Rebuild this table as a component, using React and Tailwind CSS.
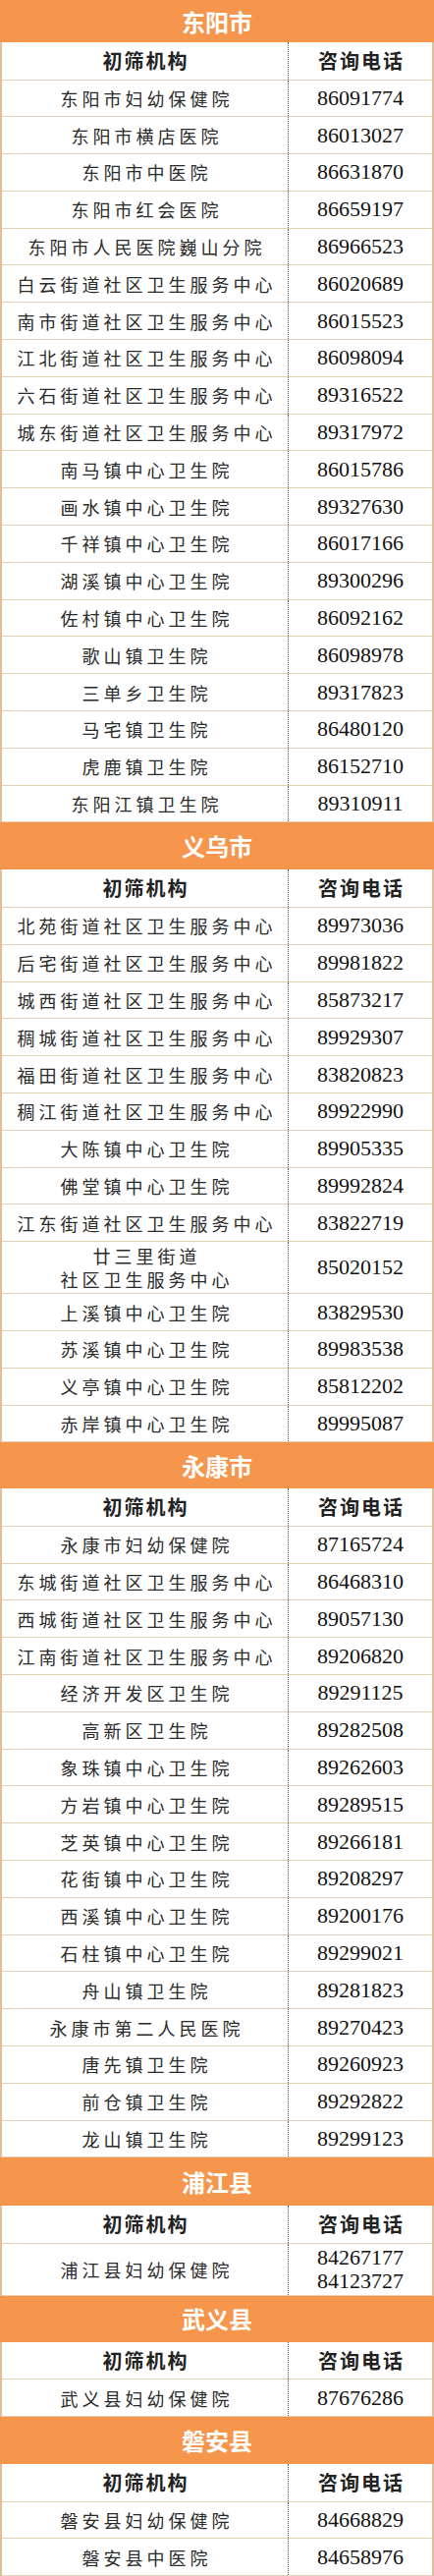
import React from "react";

const sections = [
  {
    name: "东阳市",
    headH: "h-[43px]",
    rows: [
      ["东阳市妇幼保健院", "86091774"],
      ["东阳市横店医院", "86013027"],
      ["东阳市中医院", "86631870"],
      ["东阳市红会医院", "86659197"],
      ["东阳市人民医院巍山分院", "86966523"],
      ["白云街道社区卫生服务中心", "86020689"],
      ["南市街道社区卫生服务中心", "86015523"],
      ["江北街道社区卫生服务中心", "86098094"],
      ["六石街道社区卫生服务中心", "89316522"],
      ["城东街道社区卫生服务中心", "89317972"],
      ["南马镇中心卫生院", "86015786"],
      ["画水镇中心卫生院", "89327630"],
      ["千祥镇中心卫生院", "86017166"],
      ["湖溪镇中心卫生院", "89300296"],
      ["佐村镇中心卫生院", "86092162"],
      ["歌山镇卫生院", "86098978"],
      ["三单乡卫生院", "89317823"],
      ["马宅镇卫生院", "86480120"],
      ["虎鹿镇卫生院", "86152710"],
      ["东阳江镇卫生院", "89310911"],
    ],
  },
  {
    name: "义乌市",
    headH: "h-[48px]",
    rows: [
      ["北苑街道社区卫生服务中心", "89973036"],
      ["后宅街道社区卫生服务中心", "89981822"],
      ["城西街道社区卫生服务中心", "85873217"],
      ["稠城街道社区卫生服务中心", "89929307"],
      ["福田街道社区卫生服务中心", "83820823"],
      ["稠江街道社区卫生服务中心", "89922990"],
      ["大陈镇中心卫生院", "89905335"],
      ["佛堂镇中心卫生院", "89992824"],
      ["江东街道社区卫生服务中心", "83822719"],
      [["廿三里街道", "社区卫生服务中心"], "85020152"],
      ["上溪镇中心卫生院", "83829530"],
      ["苏溪镇中心卫生院", "89983538"],
      ["义亭镇中心卫生院", "85812202"],
      ["赤岸镇中心卫生院", "89995087"],
    ],
  },
  {
    name: "永康市",
    headH: "h-[47px]",
    rows: [
      ["永康市妇幼保健院", "87165724"],
      ["东城街道社区卫生服务中心", "86468310"],
      ["西城街道社区卫生服务中心", "89057130"],
      ["江南街道社区卫生服务中心", "89206820"],
      ["经济开发区卫生院", "89291125"],
      ["高新区卫生院", "89282508"],
      ["象珠镇中心卫生院", "89262603"],
      ["方岩镇中心卫生院", "89289515"],
      ["芝英镇中心卫生院", "89266181"],
      ["花街镇中心卫生院", "89208297"],
      ["西溪镇中心卫生院", "89200176"],
      ["石柱镇中心卫生院", "89299021"],
      ["舟山镇卫生院", "89281823"],
      ["永康市第二人民医院", "89270423"],
      ["唐先镇卫生院", "89260923"],
      ["前仓镇卫生院", "89292822"],
      ["龙山镇卫生院", "89299123"],
    ],
  },
  {
    name: "浦江县",
    headH: "h-[49px]",
    rows: [["浦江县妇幼保健院", ["84267177", "84123727"]]],
  },
  {
    name: "武义县",
    headH: "h-[47px]",
    rows: [["武义县妇幼保健院", "87676286"]],
  },
  {
    name: "磐安县",
    headH: "h-[48px]",
    rows: [
      ["磐安县妇幼保健院", "84668829"],
      ["磐安县中医院", "84658976"],
    ],
  },
];

const cjk = "font-['Noto_Sans_CJK_SC',sans-serif]";

function Row({ name, phone }) {
  const tall = Array.isArray(name) || Array.isArray(phone);
  return (
    <div
      className={`flex border-b border-[#e6cfb2] ${
        tall ? "h-[53px]" : "h-[37.8px]"
      }`}
    >
      <div
        className={`w-[291px] flex flex-col items-center justify-center pl-[4px] ${cjk} font-normal text-[18px] tracking-[4px] text-[#2a2a2a] leading-[24px]`}
      >
        {Array.isArray(name) ? name.map((n) => <span key={n}>{n}</span>) : name}
      </div>
      <div className="flex-1 flex flex-col items-center justify-center border-l border-dotted border-[#555] font-['Liberation_Serif',serif] text-[22px] leading-[24px] text-[#111]">
        {Array.isArray(phone) ? phone.map((p) => <span key={p}>{p}</span>) : phone}
      </div>
    </div>
  );
}

function Section({ section }) {
  return (
    <div>
      <div
        className={`${section.headH} bg-[#f5964c] flex items-center justify-center ${cjk} font-bold text-[24px] text-white`}
      >
        {section.name}
      </div>
      <div className="border-x-2 border-[#e2bf98]">
        <div className="flex h-[38.5px] border-b border-[#e6cfb2]">
          <div className={`w-[291px] flex items-center justify-center pl-[2px] ${cjk} font-bold text-[20px] tracking-[2px] text-[#222]`}>
            初筛机构
          </div>
          <div className={`flex-1 flex items-center justify-center pl-[2px] border-l border-dotted border-[#555] ${cjk} font-bold text-[20px] tracking-[2px] text-[#222]`}>
            咨询电话
          </div>
        </div>
        {section.rows.map(([name, phone], i) => (
          <Row key={i} name={name} phone={phone} />
        ))}
      </div>
    </div>
  );
}

export default function App() {
  return (
    <div className="w-[442px] bg-white">
      {sections.map((s) => (
        <Section key={s.name} section={s} />
      ))}
    </div>
  );
}
